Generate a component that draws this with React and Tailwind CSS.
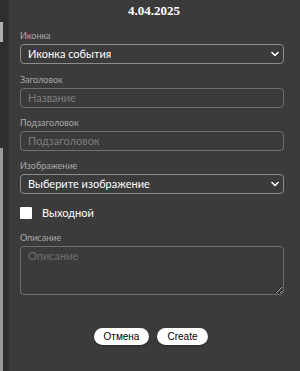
import React from "react";

function Chevron() {
  return (
    <svg width="8" height="6" viewBox="0 0 8 6" className="shrink-0">
      <path d="M1 1.5 L4 4.5 L7 1.5" fill="none" stroke="#ffffff" strokeWidth="1.6" strokeLinecap="round" strokeLinejoin="round" />
    </svg>
  );
}

function Label({ children }) {
  return <div className="text-[9px] leading-[12px] text-[#a9a9a9] mb-[2px]">{children}</div>;
}

function SelectBox({ text }) {
  return (
    <div className="h-[20px] rounded-[4px] border border-[#8c8c8c] flex items-center justify-between pl-[7px] pr-[4px]">
      <span className="text-[11px] text-white">{text}</span>
      <Chevron />
    </div>
  );
}

function InputBox({ placeholder }) {
  return (
    <div className="h-[20px] rounded-[4px] border border-[#6e6e6e] flex items-center pl-[7px]">
      <span className="text-[11px] text-[#7d7d7d]">{placeholder}</span>
    </div>
  );
}

export default function App() {
  return (
    <div className="w-[300px] h-[371px] flex bg-[#3b3b3b] overflow-hidden" style={{ fontFamily: "Lato, 'Open Sans', sans-serif" }}>
      <div className="w-[9px] h-full flex bg-[#2f2f2f]">
        <div className="w-[3px] h-full flex flex-col">
          <div className="h-[22px]" />
          <div className="h-[20px] bg-[#b0b0b0]" />
          <div className="h-[106px]" />
          <div className="flex-1 bg-[#9a9a9a]" />
        </div>
      </div>
      <div className="flex-1 flex flex-col pl-[11px] pr-[16px]">
        <div className="h-[22px] flex items-center justify-center pl-[4px]">
          <span className="text-white font-bold text-[13px]" style={{ fontFamily: "'Liberation Serif', 'Times New Roman', serif" }}>4.04.2025</span>
        </div>
        <div className="mt-[8px]">
          <Label>Иконка</Label>
          <SelectBox text="Иконка события" />
        </div>
        <div className="mt-[10px]">
          <Label>Заголовок</Label>
          <InputBox placeholder="Название" />
        </div>
        <div className="mt-[9px]">
          <Label>Подзаголовок</Label>
          <InputBox placeholder="Подзаголовок" />
        </div>
        <div className="mt-[9px]">
          <Label>Изображение</Label>
          <SelectBox text="Выберите изображение" />
        </div>
        <div className="mt-[13px] h-[12px] flex items-center gap-[10px]">
          <div className="w-[12px] h-[12px] bg-white rounded-[1px]" />
          <span className="text-[11px] leading-[12px] text-white">Выходной</span>
        </div>
        <div className="mt-[13px]">
          <Label>Описание</Label>
          <textarea
            placeholder="Описание"
            className="block w-full h-[49px] rounded-[4px] border border-[#6e6e6e] bg-transparent px-[7px] py-[1px] text-[11px] text-white placeholder:text-[#6f6f6f] outline-none"
            style={{ fontFamily: "Lato, 'Open Sans', sans-serif" }}
          />
        </div>
        <div className="mt-[33px] flex justify-center gap-[8px] pr-[2px]">
          <button className="w-[55px] h-[17px] rounded-full bg-white text-black text-[10px] leading-none shadow-[0_1px_2px_rgba(0,0,0,0.4)]" style={{ fontFamily: "'Liberation Sans', Arial, sans-serif" }}>Отмена</button>
          <button className="w-[51px] h-[17px] rounded-full bg-white text-black text-[10px] leading-none shadow-[0_1px_2px_rgba(0,0,0,0.4)]" style={{ fontFamily: "'Liberation Sans', Arial, sans-serif" }}>Create</button>
        </div>
      </div>
    </div>
  );
}
